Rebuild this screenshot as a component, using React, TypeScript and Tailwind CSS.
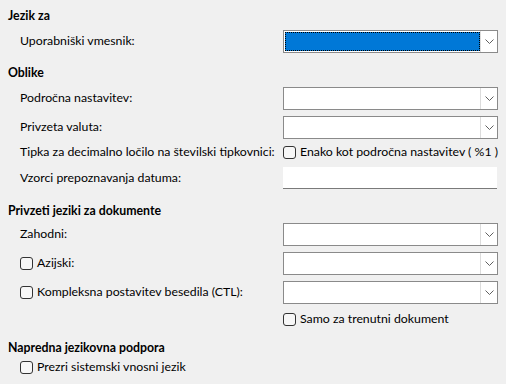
import React from "react";

const font = { fontFamily: 'Lato, "Noto Sans", sans-serif' };

function Chevron() {
  return (
    <svg width="9" height="5" viewBox="0 0 9 5" className="block">
      <path d="M0.5 0.5 L4.5 4.5 L8.5 0.5" fill="none" stroke="#606060" strokeWidth="1" />
    </svg>
  );
}

function Combo({ focused = false }: { focused?: boolean }) {
  return (
    <div className="flex h-[23px] w-[215px] border border-[#8a8a8a] bg-white">
      {focused ? (
        <div className="flex-1 bg-[#0078d7] outline-1 outline-dotted outline-black -outline-offset-1 m-[1px] mr-0" />
      ) : (
        <div className="flex-1" />
      )}
      <div className="flex h-full w-[17px] items-center justify-center border-l border-[#dcdcdc] bg-white">
        <Chevron />
      </div>
    </div>
  );
}

function Check({ label }: { label: string }) {
  return (
    <div className="flex items-center gap-[4px] whitespace-nowrap">
      <div className="h-[13px] w-[13px] shrink-0 rounded-[3px] border border-[#333] bg-[#f7f7f7]" />
      <span>{label}</span>
    </div>
  );
}

function Row({ children, right, mt, h = 23 }: { children?: React.ReactNode; right?: React.ReactNode; mt: string; h?: number }) {
  return (
    <div className={`flex items-center ${mt}`} style={{ height: h }}>
      <div className="w-[283px] shrink-0 whitespace-nowrap pl-[20px]">{children}</div>
      <div className="flex items-center">{right}</div>
    </div>
  );
}

export default function App() {
  return (
    <div className="h-[384px] w-[506px] overflow-hidden bg-[#f0f0f0] text-[12.3px] leading-none text-black" style={font}>
      <div className="ml-[8px] mt-[6px] flex h-[20px] items-center font-bold">Jezik za</div>
      <Row mt="mt-[4px]" right={<Combo focused />}>Uporabniški vmesnik:</Row>

      <div className="ml-[8px] mt-[10px] flex h-[20px] items-center font-bold">Oblike</div>
      <Row mt="mt-[4px]" right={<Combo />}>Področna nastavitev:</Row>
      <Row mt="mt-[6px]" right={<Combo />}>Privzeta valuta:</Row>
      <Row mt="mt-[3px]" h={20} right={<Check label="Enako kot področna nastavitev ( %1 )" />}>
        Tipka za decimalno ločilo na številski tipkovnici:
      </Row>
      <Row
        mt="mt-[5px]"
        h={22}
        right={<div className="h-[22px] w-[214px] border-b border-[#7a7a7a] bg-white" />}
      >
        Vzorci prepoznavanja datuma:
      </Row>

      <div className="ml-[8px] mt-[12px] flex h-[20px] items-center font-bold">Privzeti jeziki za dokumente</div>
      <Row mt="mt-[2px]" right={<Combo />}>Zahodni:</Row>
      <Row mt="mt-[6px]" right={<Combo />}>
        <Check label="Azijski:" />
      </Row>
      <Row mt="mt-[6px]" right={<Combo />}>
        <Check label="Kompleksna postavitev besedila (CTL):" />
      </Row>
      <Row mt="mt-[5px]" h={20} right={<Check label="Samo za trenutni dokument" />} />

      <div className="ml-[8px] mt-[10px] flex h-[18px] items-center font-bold">Napredna jezikovna podpora</div>
      <div className="mt-[1px] flex h-[18px] items-center pl-[20px]">
        <Check label="Prezri sistemski vnosni jezik" />
      </div>
    </div>
  );
}
